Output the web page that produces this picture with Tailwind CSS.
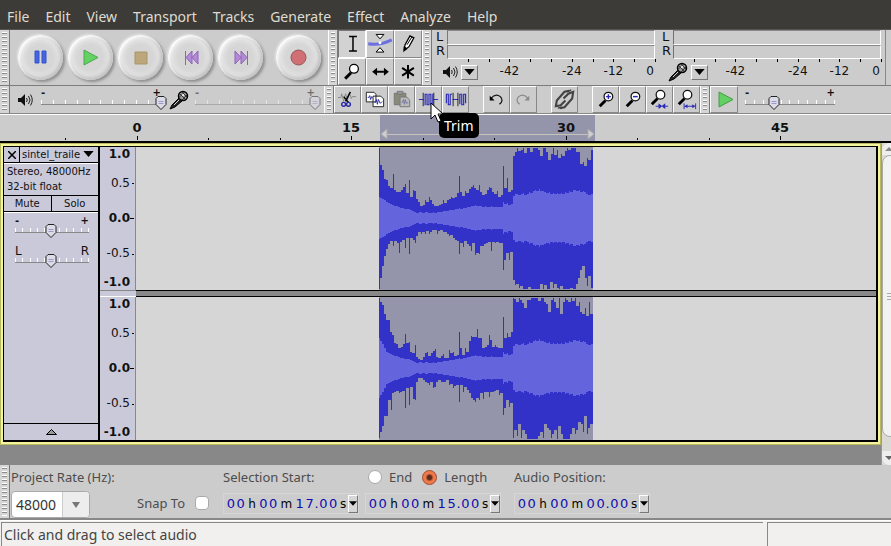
<!DOCTYPE html>
<html lang="en">

<head>
    <meta charset="UTF-8">
    <meta name="viewport" content="width=device-width,initial-scale=1.0">
    <title>Audacity</title>
    <script src="https://cdn.jsdelivr.net/npm/@tailwindcss/browser@4"></script>
</head>

<body class="flex min-h-screen flex-col bg-[#cccccc] font-['DejaVu_Sans',sans-serif] text-xs text-[#111]">

    <!-- shared drawings -->
    <svg class="hidden">
        <symbol id="speaker" viewBox="0 0 16 14">
            <path d="M1 5h3l4-4v12l-4-4H1z" fill="#111" />
            <path d="M9.500 5q1.500 2 0 4M11.500 3q3 4 0 8M13.500 1.500q3.500 5.500 0 11" fill="none" stroke="#222" />
        </symbol>
        <symbol id="mic" viewBox="0 0 20 20">
            <path d="M1 19l2-4 7-7 3 3-7 6z" fill="#222" stroke="#000" />
            <path d="M5 15l6-6" stroke="#ccc" />
            <circle cx="14" cy="6" r="4.500" fill="#999" stroke="#000" stroke-width="1.500" />
            <path d="M11 4l5 5M13 2l5 5M10.500 7l5-5M13 10l5-5" stroke="#222" stroke-width=".8" />
            <circle cx="14" cy="5" r="1" fill="#fff" />
        </symbol>
        <symbol id="down" viewBox="0 0 12 7">
            <path d="M0 0h12L6 7z" fill="#000" />
        </symbol>
    </svg>

    <!-- MENU -->
    <nav class="flex h-[30px] items-center gap-4 border-b border-[#55534d] bg-[#3c3b37] px-[7px] pt-1 font-['Noto_Sans',sans-serif] text-sm text-[#dfdbd2]">
        <a href="#">File</a>
        <a href="#">Edit</a>
        <a href="#">View</a>
        <a href="#">Transport</a>
        <a href="#">Tracks</a>
        <a href="#">Generate</a>
        <a href="#">Effect</a>
        <a href="#">Analyze</a>
        <a href="#">Help</a>
    </nav>

    <!-- TOOLBARS, first row -->
    <div class="flex h-14 border-b border-[#7c7c7c]">
        <div class="grip w-[10px] shrink-0 border-r border-[#777] bg-[#d6d6d6] p-[2px]"></div>
        <div class="flex w-[318px] shrink-0 items-center pl-[8px]" id="transport"></div>
        <div class="grip w-[10px] shrink-0 border-x border-l-white border-r-[#777] bg-[#d6d6d6] p-[2px]"></div>
        <div class="grid w-[84px] shrink-0 grid-cols-3 grid-rows-2" id="tools"></div>
        <div class="grip w-[10px] shrink-0 border-x border-l-white border-r-[#777] bg-[#d6d6d6] p-[2px]"></div>
        <div class="flex flex-1 gap-[4px] pr-px pl-[4px]" id="meters"></div>
        <div class="w-[6px] border-l border-[#888]"></div>
    </div>

    <!-- TOOLBARS, second row -->
    <div class="flex h-7 border-b border-[#888]">
        <div class="grip w-[10px] shrink-0 border-r border-[#777] bg-[#d6d6d6] p-[2px]"></div>
        <div class="flex w-[314px] shrink-0 items-center pl-[7px]">
            <svg class="h-[14px] w-4"><use href="#speaker" /></svg>
            <div class="slider ml-[3px] w-[130px]" data-label="Output volume" data-value="100" data-ticks="11"></div>
            <svg class="ml-[3px] h-5 w-5"><use href="#mic" /></svg>
            <div class="slider ml-px w-[130px] opacity-50" data-label="Input volume" data-value="100" data-ticks="11"></div>
        </div>
        <div class="grip w-[10px] shrink-0 border-x border-l-white border-r-[#777] bg-[#d6d6d6] p-[2px]"></div>
        <div class="flex shrink-0" id="edit"></div>
        <div class="grip w-[10px] shrink-0 border-x border-l-white border-r-[#777] bg-[#d6d6d6] p-[2px]"></div>
        <button class="h-[27px] w-[28px] shrink-0 border border-t-white border-r-[#888] border-b-[#888] border-l-white" aria-label="Play at speed">
            <svg class="h-full w-full" viewBox="0 0 26 25"><path d="M8 5v15l14-7.500z" fill="#62d062" stroke="#459c45" /></svg>
        </button>
        <div class="slider ml-[2px] w-[100px]" data-label="Playback speed" data-value="32" data-ticks="11"></div>
    </div>

    <!-- TIMELINE -->
    <div class="relative h-[29px] overflow-hidden border-t border-b-2 border-t-white border-b-black text-[13px] font-bold" id="timeline">
        <div class="absolute inset-y-0 left-[380px] w-[215px] bg-[#9494aa]">
            <svg class="absolute bottom-px h-3 w-full" viewBox="0 0 215 12">
                <path d="M6 6.500h203" stroke="#c4c4bc" />
                <path d="M7 1v10L1 6zM208 1v10l6-5z" fill="#cfcfcf" stroke="#aaa" />
            </svg>
        </div>
    </div>

    <!-- TRACKS -->
    <main class="flex flex-1 bg-[#888]">
        <div class="flex-1">
            <section class="border border-[#b9b95f] bg-[#f4f49c] p-[2px]">
                <div class="flex border-t border-r-2 border-b-2 border-l border-black bg-[#c9c9da]">

                    <div class="flex w-[96px] shrink-0 flex-col border-r-2 border-black text-[10px]">
                        <div class="flex h-4 items-center border-b border-black">
                            <button class="flex h-full w-[16px] items-center justify-center border-r border-black" aria-label="Close track">
                                <svg class="h-2 w-2" viewBox="0 0 8 8"><path d="M0 0l8 8M8 0L0 8" stroke="#000" stroke-width="1.500" /></svg>
                            </button>
                            <button class="flex flex-1 items-center justify-between pr-1 pl-[2px]">sintel_traile<svg class="h-[6px] w-[11px]"><use href="#down" /></svg></button>
                        </div>
                        <div class="h-[33px] border-t border-b border-t-white border-b-black pl-[3px] leading-[15px]">
                            <p>Stereo, 48000Hz</p>
                            <p>32-bit float</p>
                        </div>
                        <div class="flex h-4 border-b border-black">
                            <button class="flex-1 border-r border-black">Mute</button>
                            <button class="flex-1">Solo</button>
                        </div>
                        <div class="flex flex-1 flex-col gap-[3px] border-t border-white pt-px pr-1 pl-[6px]">
                            <div class="slider h-[27px]" data-label="Gain" data-value="49" data-ticks="11"></div>
                            <div class="slider h-[27px]" data-label="Pan" data-value="49" data-ticks="11" data-left="L" data-right="R"></div>
                        </div>
                        <button class="flex h-[17px] items-center justify-center border-t border-black" aria-label="Collapse">
                            <svg class="h-[6px] w-[11px]" viewBox="0 0 11 6"><path d="M.5 5.500h10L5.500.5z" fill="#999" stroke="#000" /></svg>
                        </button>
                    </div>

                    <div class="flex flex-1 flex-col">
                        <div class="channel flex h-[143px]"></div>
                        <div class="flex h-[7px]">
                            <div class="w-[36px] border-y border-t-[#888] border-b-white"></div>
                            <div class="flex-1 border-y border-black bg-[#888]"></div>
                        </div>
                        <div class="channel flex h-[143px]"></div>
                    </div>
                </div>
            </section>
        </div>

        <!-- scrollbar -->
        <div class="flex w-[10px] flex-col overflow-hidden border-l border-[#999] bg-[#dcdad5]">
            <div class="flex h-3 w-[14px] items-center justify-center rounded-tl-lg bg-[#eee]"><svg class="h-1 w-2" viewBox="0 0 8 4"><path d="M0 4h8L4 0z" fill="#888" /></svg></div>
            <div class="flex w-[16px] flex-1 flex-col justify-center gap-[2px] rounded-l-lg border border-[#aaa] bg-[#f2f2f2] pl-1">
                <i class="h-px bg-[#aaa]"></i><i class="h-px bg-[#aaa]"></i><i class="h-px bg-[#aaa]"></i>
            </div>
            <div class="h-[14px]"></div>
            <div class="flex h-[14px] w-[14px] items-center justify-center rounded-bl-lg bg-[#eee]"><svg class="h-1 w-2"><path d="M0 0h8L4 4z" fill="#666" /></svg></div>
        </div>
    </main>

    <!-- SELECTION BAR -->
    <div class="flex h-[55px] border-b-2 border-[#888] font-['Noto_Sans',sans-serif] text-[13px] text-[#4c4c4c]">
        <div class="grip w-[10px] shrink-0 border-r border-[#777] bg-[#d6d6d6] p-[2px]"></div>
        <div class="flex w-[127px] shrink-0 flex-col pt-[2px] pl-px">
            <label class="leading-5" for="rate">Project Rate (Hz):</label>
            <div class="mt-[4px] flex h-[27px] w-[79px] rounded border border-[#aaa] bg-white">
                <input class="w-[50px] min-w-0 rounded-l pl-1 text-sm text-[#333]" id="rate" value="48000">
                <button class="flex flex-1 items-center justify-center rounded-r border-l border-[#ccc] bg-[#ededed]" aria-label="Choose rate"><svg class="h-[6px] w-2" viewBox="0 0 8 6"><path d="M0 0h8L4 6z" fill="#777" /></svg></button>
            </div>
        </div>
        <label class="flex w-[86px] shrink-0 items-center justify-between self-end pr-[14px] pb-[5px] leading-5">Snap To
            <input class="h-[14px] w-[14px] appearance-none rounded-sm border border-[#aaa] bg-white" type="checkbox">
        </label>
        <div class="w-[142px] shrink-0 pt-[2px]">
            <p class="leading-5">Selection Start:</p>
            <div class="time" data-value="00 h 00 m 17.00 s" data-label="Selection start"></div>
        </div>
        <div class="w-[149px] shrink-0 pt-[2px]">
            <div class="flex items-center leading-5">
                <label class="flex items-center gap-[7px] pl-[3px]"><input class="h-[14px] w-[14px] appearance-none rounded-full border border-[#aaa] bg-white" type="radio" name="mode">End</label>
                <label class="ml-[10px] flex items-center gap-[7px]"><input class="h-[15px] w-[15px] appearance-none rounded-full border border-[#a04a2c] bg-[radial-gradient(circle,#5b2c1d_2px,#f0784a_4px)]" type="radio" name="mode" checked>Length</label>
            </div>
            <div class="time" data-value="00 h 00 m 15.00 s" data-label="Selection length"></div>
        </div>
        <div class="pt-[2px]">
            <p class="leading-5">Audio Position:</p>
            <div class="time" data-value="00 h 00 m 00.00 s" data-label="Audio position"></div>
        </div>
    </div>

    <!-- STATUS -->
    <footer class="flex h-[26px] gap-1 border-t border-white bg-[#f1f0ee] pt-px pl-px font-['Noto_Sans',sans-serif] text-sm text-[#444]">
        <p class="flex-1 border-t border-l border-[#888] pl-[2px] leading-6">Click and drag to select audio</p>
        <p class="w-[124px] border-t border-l border-[#888]"></p>
    </footer>

    <script>
        // grip ridges
        document.querySelectorAll('.grip').forEach(function (el) {
            el.innerHTML = '<div class="h-full bg-[repeating-linear-gradient(#fff_0_1px,#8c8c8c_1px_2px,#d6d6d6_2px_4px)]"></div>'
        })

        // transport
        var transport = [
            ['Pause', '<path d="M17 16h4v12h-4zM24 16h4v12h-4z" fill="#4464e0" stroke="#3454cc"/>'],
            ['Play', '<path d="M16 15v15l14-7.500z" fill="#62d262" stroke="#4fa84f"/>'],
            ['Stop', '<path d="M17 17h12v12H17z" fill="#bba77a" stroke="#a8956a"/>'],
            ['Skip to Start', '<path d="M17.500 16v14M24 16v13l-6-6.500zM30 16v13l-6-6.500z" fill="#b48ad8" stroke="#8f62b8"/>'],
            ['Skip to End', '<path d="M29.500 16v14M17 16v13l6-6.500zM23 16v13l6-6.500z" fill="#b48ad8" stroke="#8f62b8"/>'],
            ['Record', '<circle cx="22.500" cy="22.500" r="7.500" fill="#d07074" stroke="#94565a"/>']
        ]
        document.getElementById('transport').innerHTML = transport.map(function (b, i) {
            return `<button class="mr-[5px] h-[45px] w-[45px] rounded-full bg-[radial-gradient(circle,#d6d6d6_40%,#e2e2e2_58%,#d0d0d0_72%)] shadow-[2px_2px_3px_#8c8c8c,-1px_-1px_2px_#e8e8e8,inset_2px_2px_3px_#fff,inset_-2px_-2px_4px_#c0c0c0] ${i === 5 ? 'ml-[8px]' : ''}" aria-label="${b[0]}"><svg class="h-full w-full" viewBox="0 0 45 45">${b[1]}</svg></button>`
        }).join('')

        // tools
        var tools = [
            ['Selection', '<path d="M10 5.500h8M10 20.500h8M14 5v15" stroke="#000" stroke-width="1.500"/>'],
            ['Envelope', '<path d="M1 13q12 2 24-4" fill="none" stroke="#6c70e0" stroke-width="3"/><path d="M9 3.500h8L13 8zM9 21.500h8L13 17z" fill="#fff" stroke="#000"/><circle cx="13" cy="12" r="1.500" fill="#fff"/>'],
            ['Draw', '<path d="M9 20l1-6 5-9 4 2-5 9z" fill="#fff" stroke="#000" stroke-width="1.300"/><path d="M9 20v-4l3 2zM12 14l5-8" fill="#000" stroke="#000"/>'],
            ['Zoom', '<path d="M6 20l6-6" stroke="#000" stroke-width="3"/><circle cx="15" cy="10" r="4.500" fill="#fff" stroke="#000" stroke-width="1.300"/>'],
            ['Time Shift', '<path d="M9 13h8" stroke="#000" stroke-width="2"/><path d="M5 13l5-4v8zM22 13l-5-4v8z"/>'],
            ['Multi', '<path d="M13 6v14M7 9l12 8M19 9L7 17" stroke="#000" stroke-width="2"/>']
        ]
        document.getElementById('tools').innerHTML = tools.map(function (b, i) {
            return `<button class="border ${i === 0 ? 'border-t-[#777] border-r-white border-b-white border-l-[#777] bg-[#d2d2d2]' : 'border-t-white border-r-[#888] border-b-[#888] border-l-white'}" aria-label="${b[0]}"><svg class="h-full w-full" viewBox="0 0 26 26">${b[1]}</svg></button>`
        }).join('')

        // level meters
        document.getElementById('meters').innerHTML = [['speaker', 'border-l-[#4a9a4a]', 'Output'], ['mic', 'border-l-[#c05050]', 'Input']].map(function (m) {
            var ticks = ''
            for (var i = 1; i <= 10; i++) ticks += `<i class="absolute top-0 h-[3px] w-px bg-black" style="left:${i * 10}%"></i>`
            return `<div class="flex-1">
  <div class="flex h-[29px]">
    <div class="w-[11px] text-[13px] leading-[14px]"><p>L</p><p>R</p></div>
    <div class="flex-1 pr-[3px]">
      <div class="h-[15px] border border-t-[#888] border-r-white border-b-white ${m[1]}"></div>
      <div class="h-[14px] border border-t-[#888] border-r-white border-b-white ${m[1]}"></div>
    </div>
  </div>
  <div class="relative flex h-[26px] items-center pl-[6px]">
    <svg class="${m[0] === 'mic' ? 'h-5 w-5' : 'h-[14px] w-4'}"><use href="#${m[0]}"/></svg>
    <button class="ml-[3px] flex h-[15px] w-[17px] items-center justify-center border border-t-white border-r-[#777] border-b-[#777] border-l-white" aria-label="${m[2]} meter options"><svg class="h-[6px] w-[11px]"><use href="#down"/></svg></button>
    <div class="absolute inset-y-0 right-[3px] left-[11px] leading-6">${ticks}
      <span class="absolute left-[30%] -translate-x-1/2">-42</span>
      <span class="absolute left-[60%] -translate-x-1/2">-24</span>
      <span class="absolute left-[80%] -translate-x-1/2">-12</span>
      <span class="absolute right-[1px]">0</span>
    </div>
  </div>
</div>`
        }).join('')

        // edit buttons
        var page = '<path d="M4.500 5.500h8l2 2v8h-10zM11.500 9.500h8l3 3v8h-11z" fill="#fff" stroke="#222"/>'
        var lens = '<path d="M7 20l6-6" stroke="#000" stroke-width="3"/><circle cx="16" cy="10" r="4.500" fill="#fff" stroke="#111" stroke-width="1.300"/>'
        var edit = [
            ['Cut', '<path d="M3 11h3l1-4 2 8 2-8 2 6 2-7 2 6 1-2h4" fill="none" stroke="#888"/><path d="M16 5l-5 10M9 10l5 6" stroke="#000" stroke-width="1.500"/><g fill="none" stroke="#2a2aa8" stroke-width="1.500"><circle cx="9" cy="18" r="2"/><circle cx="14" cy="18" r="2"/></g>'],
            ['Copy', page + '<path d="M6 11h1l1-2 1 4 1-3 1 1M13 16h1l1-3 1 5 1-5 2 4 2-2" fill="none" stroke="#2a2aa8"/>'],
            ['Paste', '<path d="M5.500 6.500h12v12h-12z" fill="#8a8a78" stroke="#777"/><path d="M8.500 4.500h6v3h-6z" fill="#999" stroke="#777"/><path d="M11.500 10.500h7l3 3v7h-10z" fill="#bbb" stroke="#777"/><path d="M13 16h1l1-3 1 5 1-5 1 4 2-1" fill="none" stroke="#77a"/>'],
            ['Trim', '<path d="M3 13h5M18 13h5" stroke="#2a2ab8"/><path d="M7.500 6v14M18.500 6v14" stroke="#222"/><path d="M9.500 19V7.500h2V18.500h2V7.500h2V18.500h2V7" fill="none" stroke="#2a2ab8" stroke-width="1.200"/>'],
            ['Silence', '<path d="M10 13h6" stroke="#2a2ab8"/><path d="M10.500 6v14M15.500 6v14" stroke="#222"/><path d="M3.500 17V7.500h2V18.500h2V7.500h2M17.500 18V7.500h2V18.500h2V7.500h2V17" fill="none" stroke="#2a2ab8" stroke-width="1.200"/>'],
            null,
            ['Undo', '<path d="M7 12q5-6 10-2 4 4-1 8" fill="none" stroke="#111" stroke-width="1.300"/><path d="M6 9v5h5z"/>'],
            ['Redo', '<path d="M18 12q-5-6-10-2-4 4 1 8" fill="none" stroke="#888" stroke-width="1.300"/><path d="M19 9v5h-5z" fill="#888"/>'],
            null,
            ['Sync-Lock', '<g fill="none" stroke="#444" stroke-width="2.200"><path d="M18 4l-5 1-8 9-1 6 5-1 5-5"/><path d="M8 22l5-1 8-9 1-7-5 2-5 5"/></g><path d="M16 5l4-2M6 22l4-1" stroke="#444" stroke-width="1.500"/>'],
            null,
            ['Zoom In', lens + '<path d="M13.500 10h5M16 7.500v5" stroke="#2a2ab8" stroke-width="1.500"/>'],
            ['Zoom Out', lens + '<path d="M13.500 10h5" stroke="#2a2ab8" stroke-width="1.500"/>'],
            ['Fit Selection', '<g transform="translate(-2 -2)">' + lens + '</g><path d="M9 20h5M17 20h5" stroke="#2a2ab8"/><path d="M12 17l4 3-4 3zM19 17l-4 3 4 3z" fill="#2a2ab8"/>'],
            ['Fit Project', '<g transform="translate(-2 -2)">' + lens + '</g><path d="M10.500 17v6M22.500 17v6M11 20h11" stroke="#2a2ab8"/><path d="M11 20l3-2v4zM22 20l-3-2v4z" fill="#2a2ab8"/>']
        ]
        document.getElementById('edit').innerHTML = edit.map(function (b) {
            if (!b) return '<span class="w-[14px]"></span>'
            var tip = b[0] === 'Trim' ? `<svg class="absolute top-[15px] left-[14px] z-20 h-[22px] w-[14px]" viewBox="0 0 14 22"><path d="M1 1v16l4-4 3 7 3-1-3-7h5z" fill="#fff" stroke="#000"/></svg>
<span class="absolute top-[26px] left-[23px] z-10 rounded-[5px] bg-black px-[5px] font-['Noto_Sans',sans-serif] text-sm leading-[25px] text-white" role="tooltip">Trim</span>` : ''
            return `<button class="relative h-[27px] w-[27px] border border-t-white border-r-[#888] border-b-[#888] border-l-white" aria-label="${b[0]}"><svg class="h-full w-full" viewBox="0 0 26 26">${b[1]}</svg>${tip}</button>`
        }).join('')

        // sliders: drawn scale with the range input on top
        document.querySelectorAll('.slider').forEach(function (el) {
            var d = el.dataset, ticks = ''
            for (var i = 0; i < d.ticks; i++) ticks += '<i class="h-[4px] w-px bg-white"></i>'
            var ends = d.left ? 'text-xs' : 'text-[10px] font-bold'
            el.innerHTML = `<div class="relative mx-[5px] h-[27px]">
  <div class="flex justify-between leading-[14px] ${ends}"><span>${d.left || '-'}</span><span>${d.right || '+'}</span></div>
  <div class="flex justify-between border-b border-[#888]">${ticks}</div>
  <svg class="absolute top-[9px] h-[15px] w-[13px] -translate-x-1/2" style="left:${d.value}%" viewBox="0 0 13 15"><path d="M3.500 1.500h6l2 2v6l-5 5-5-5v-6z" fill="#dcdce8" stroke="#222"/><path d="M4 6.500h5M4 8.500h5" stroke="#9a9ac8"/></svg>
  <input class="absolute inset-0 w-full opacity-0" type="range" value="${d.value}" aria-label="${d.label}">
</div>`
        })

        // time ruler: 15 s is 214 px, starting at x = 137
        var timeline = ''
        for (var i = 0; i < 11; i++) {
            var x = 65 + Math.round(i * 71.5), major = i % 3 === 1
            timeline += `<i class="absolute bottom-px w-px bg-black ${major ? 'h-1' : 'h-[2px]'}" style="left:${x}px"></i>`
            if (major) timeline += `<span class="absolute top-[3px] -translate-x-1/2 leading-5" style="left:${x}px">${(i - 1) * 5}</span>`
        }
        document.getElementById('timeline').insertAdjacentHTML('beforeend', timeline)

        // time fields, one box per digit
        document.querySelectorAll('.time').forEach(function (el) {
            var d = el.dataset
            el.innerHTML = `<div class="mt-[6px] flex h-[21px] w-[136px] items-center border border-[#d6d6d6] pl-[2px] font-['DejaVu_Sans',sans-serif] text-[13px]" role="group" aria-label="${d.label}">` +
                d.value.split(' ').map(function (part) {
                    if (/[a-z]/.test(part)) return `<span class="${part === 's' ? 'w-[10px]' : part === 'm' ? 'w-[17px]' : 'w-[13px]'} text-center text-xs text-black">${part}</span>`
                    return part.split('').map(function (c) {
                        return c === '.' ? '<span class="w-1 text-[#0c0cb0]">.</span>' : `<input class="w-[10px] min-w-0 text-center text-[#0c0cb0]" value="${c}" maxlength="1" aria-label="${d.label} digit">`
                    }).join('')
                }).join('') +
                `<button class="ml-auto flex h-[18px] w-[10px] items-center justify-center border border-t-white border-r-[#777] border-b-[#777] border-l-white bg-[#d6d6d6]" aria-label="${d.label} format"><svg class="h-[5px] w-2"><use href="#down"/></svg></button></div>`
        })

        // waveforms, half heights for every second pixel: peaks up, peaks down, rms
        var rms = [16, 15, 14, 13, 12, 12, 11, 10, 10, 9, 9, 9, 8, 7, 6, 5, 6, 6, 5, 6, 6, 5, 5, 6, 5, 6, 6, 6, 7, 7, 7, 8, 8, 8, 9, 9, 10, 9, 10, 10, 11, 11, 12, 12, 13, 12, 12, 12, 11, 12, 11, 11, 12, 11, 11, 11, 11, 11, 16, 14, 15, 13, 14, 22, 24, 24, 23, 24, 25, 23, 24, 26, 25, 27, 28, 27, 29, 27, 27, 26, 25, 26, 24, 25, 24, 25, 24, 25, 24, 26, 25, 27, 26, 28, 28, 27, 28, 26, 27, 26, 24, 23, 24]
        var waves = [
            {
                up: [70, 53, 48, 39, 38, 32, 30, 44, 28, 26, 26, 28, 31, 34, 25, 38, 21, 28, 27, 19, 16, 12, 13, 18, 16, 21, 18, 14, 12, 12, 13, 14, 18, 15, 18, 19, 21, 20, 21, 25, 42, 26, 22, 27, 25, 29, 31, 33, 30, 28, 33, 26, 23, 24, 28, 31, 30, 26, 24, 27, 21, 23, 52, 30, 40, 26, 28, 62, 66, 70, 67, 68, 70, 65, 70, 70, 66, 70, 70, 70, 68, 62, 70, 70, 66, 58, 64, 70, 63, 68, 60, 64, 62, 67, 70, 68, 70, 70, 70, 66, 66, 54, 56, 52, 60, 58, 68],
                down: [71, 60, 48, 38, 31, 26, 23, 28, 23, 25, 35, 24, 22, 30, 20, 36, 20, 22, 25, 18, 14, 16, 14, 16, 13, 16, 14, 12, 12, 16, 13, 12, 14, 14, 16, 18, 17, 20, 22, 23, 36, 25, 29, 23, 26, 28, 33, 25, 37, 35, 36, 28, 28, 26, 25, 24, 33, 24, 25, 24, 25, 25, 52, 42, 35, 42, 34, 62, 67, 66, 70, 68, 71, 71, 71, 69, 71, 71, 71, 71, 71, 66, 71, 67, 71, 71, 64, 70, 66, 70, 71, 68, 71, 71, 71, 71, 70, 71, 71, 66, 60, 52, 48, 60, 68, 58, 70],
                rms: [21, 20, 19, 18].concat(rms)
            },
            {
                up: [70, 66, 63, 54, 48, 48, 36, 33, 25, 24, 20, 21, 24, 34, 25, 26, 16, 15, 23, 11, 9, 8, 11, 15, 16, 12, 15, 17, 19, 11, 10, 12, 14, 10, 10, 18, 15, 16, 12, 13, 36, 20, 13, 20, 16, 27, 32, 31, 31, 39, 30, 30, 20, 21, 23, 33, 28, 21, 23, 21, 20, 20, 51, 30, 35, 31, 36, 70, 69, 66, 70, 68, 65, 60, 68, 68, 70, 70, 70, 70, 67, 70, 70, 66, 64, 56, 68, 70, 66, 60, 70, 54, 66, 70, 68, 66, 70, 67, 70, 62, 66, 56, 54, 60, 52, 66, 54],
                down: [70, 64, 58, 48, 48, 32, 42, 25, 24, 23, 25, 24, 23, 40, 20, 37, 19, 31, 32, 14, 10, 10, 12, 14, 15, 17, 14, 20, 19, 14, 12, 14, 14, 14, 12, 17, 16, 20, 18, 17, 34, 17, 24, 19, 22, 25, 30, 32, 34, 30, 32, 25, 31, 24, 24, 29, 24, 24, 23, 22, 27, 25, 47, 40, 32, 39, 35, 70, 62, 68, 56, 70, 62, 66, 71, 71, 71, 71, 71, 71, 68, 64, 70, 56, 60, 62, 70, 66, 62, 71, 58, 66, 71, 71, 71, 71, 66, 60, 66, 62, 54, 56, 64, 48, 66, 60, 56],
                rms: [30, 27, 24, 20].concat(rms)
            }
        ]

        // one pixel per sample, then one at the lower of it and the next, which keeps peaks thin
        function bars(up, down) {
            return up.map(function (h, i) {
                var d = down[i], low = Math.min(h, up[i + 1] || h), lowDown = Math.min(d, down[i + 1] || d)
                return `M${i * 2} ${71 - h}h1V${71 + d}h-1zM${i * 2 + 1} ${71 - low}h1V${71 + lowDown}h-1z`
            }).join('')
        }

        document.querySelectorAll('.channel').forEach(function (el, i) {
            var w = waves[i]
            el.innerHTML = `<div class="relative flex w-[36px] flex-col border-r border-[#888] pr-[5px] text-right leading-[15px]">
  <b>1.0</b><span class="mt-[14px]">0.5</span><b class="mt-5">0.0</b><span class="mt-5">-0.5</span><b class="mt-[14px]">-1.0</b>
  <i class="absolute top-[36px] right-[1px] h-px w-[2px] bg-black"></i><i class="absolute top-[71px] right-[1px] h-px w-1 bg-black"></i><i class="absolute top-[107px] right-[1px] h-px w-[2px] bg-black"></i>
</div>
<div class="relative flex-1 bg-[#d6d6d6]">
  <svg class="absolute inset-y-0 left-[243px] h-full w-[214px] bg-[#9494aa]" viewBox="0 0 214 143" preserveAspectRatio="none" shape-rendering="crispEdges">
    <path d="${bars(w.up, w.down)}" fill="#3232c8"/>
    <path d="${bars(w.rms, w.rms)}" fill="#6464dc"/>
  </svg>
</div>`
        })
    </script>
</body>

</html>
